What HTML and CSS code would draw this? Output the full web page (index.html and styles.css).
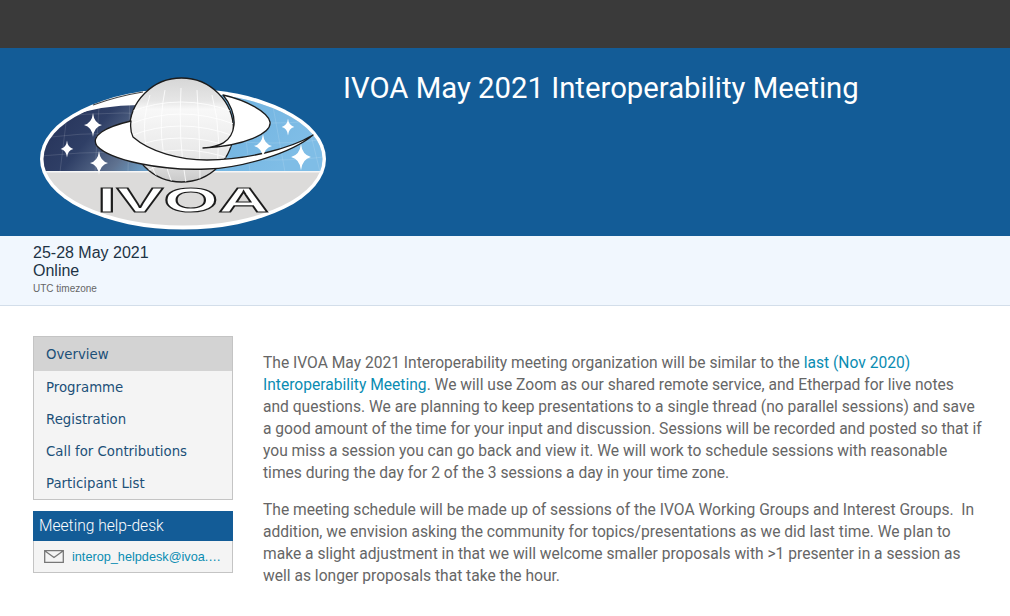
FILE: index.html
```html
<!DOCTYPE html>
<html>
<head>
<meta charset="UTF-8">
<title>IVOA May 2021 Interoperability Meeting</title>
<link rel="stylesheet" href="styles.css">
</head>
<body>
<div class="topbar"></div>
<div class="header">
	<svg class="logo" viewBox="33 66 300 170" width="300" height="170">
		<defs>
			<linearGradient id="night" x1="0" x2="1" y1="0" y2="0.25">
				<stop offset="0" stop-color="#212c52"/>
				<stop offset="0.3" stop-color="#2f3f66"/>
				<stop offset="0.46" stop-color="#5f7290"/>
				<stop offset="0.62" stop-color="#6fb2e0"/>
				<stop offset="1" stop-color="#7fbde6"/>
			</linearGradient>
			<linearGradient id="ball" x1="0" x2="0" y1="0" y2="1">
				<stop offset="0" stop-color="#d6d6d6"/>
				<stop offset="0.22" stop-color="#e6e6e6"/>
				<stop offset="0.3" stop-color="#f8f8f8"/>
				<stop offset="0.75" stop-color="#e8e8e8"/>
				<stop offset="1" stop-color="#c9c9c9"/>
			</linearGradient>
			<clipPath id="oval"><ellipse cx="183" cy="159" rx="139.500" ry="66.500"/></clipPath>
			<clipPath id="sphere"><circle cx="181.500" cy="130" r="52"/></clipPath>
			<path id="star" d="M0-12Q1 -2 9 0Q1 2 0 12Q-1 2-9 0Q-1-2 0-12Z" fill="#fff"/>
		</defs>
		<ellipse cx="183" cy="159" rx="143" ry="70.500" fill="#fff"/>
		<ellipse cx="183" cy="159" rx="139.500" ry="66.500" fill="#dcdbda"/>
		<g clip-path="url(#oval)">
			<rect x="40" y="85" width="290" height="87" fill="url(#night)"/>
			<path d="M50 118Q120 108 200 118T330 118M40 138Q120 128 200 138T330 138M40 156Q120 148 200 156T330 156M70 90L60 172M100 90L95 172M130 90L128 172M240 90L250 172M270 90L285 172M300 90L320 172" stroke="#fff" stroke-opacity=".13" fill="none"/>
			<rect x="40" y="171" width="290" height="1.500" fill="#f6f6f6"/>
		</g>
		<path d="M70 116Q108 97 145 91L145 105Q105 104 70 116Z" fill="#fff"/>
		<path d="M93 105Q118 96 143 92" stroke="#444" stroke-width="1.200" fill="none"/>
		<circle cx="181.500" cy="130" r="52" fill="url(#ball)" stroke="#1c1c1c" stroke-width="1.300"/>
		<g clip-path="url(#sphere)" stroke="#fff" stroke-opacity=".8" fill="none">
			<path d="M130 112Q180 92 234 112M130 124Q180 104 234 124M130 136Q180 116 234 136M130 148Q180 128 234 148M135 160Q180 140 234 160M145 172Q180 152 225 172"/>
			<path d="M150 95Q135 140 160 183M165 90Q155 140 172 183M181 88Q178 140 186 183M197 90Q200 140 200 183M212 95Q224 140 214 183"/>
		</g>
		<path d="M223 95C246 100 268 112 270 122C272 133 245 146 203 148C218 147 232 143 234 125C235 115 230 103 223 95Z" fill="#fff" stroke="#1c1c1c" stroke-width="1.300" stroke-linejoin="round"/>
		<path d="M313 135C292 153 242 168 207 169C160 171 110 160 97 146C90 136 105 127 131 121C130 128 131 133 133 137C150 152 180 160 207 160C245 160 290 149 313 135Z" fill="#fff" stroke="#1c1c1c" stroke-width="1.300" stroke-linejoin="round"/>
		<use href="#star" transform="translate(93 125)"/>
		<use href="#star" transform="translate(67 149) scale(.7)"/>
		<use href="#star" transform="translate(99 163)"/>
		<use href="#star" transform="translate(288 127) scale(.7)"/>
		<use href="#star" transform="translate(263 146)"/>
		<use href="#star" transform="translate(301 157) scale(1.100)"/>
		<text class="logotext" x="183" y="212" text-anchor="middle" textLength="172" lengthAdjust="spacingAndGlyphs">IVOA</text>
	</svg>
	<h1 class="title">IVOA May 2021 Interoperability Meeting</h1>
</div>
<div class="infobar">
	<div class="dates">25-28 May 2021</div>
	<div class="place">Online</div>
	<div class="zone">UTC timezone</div>
</div>
<div class="main">
	<div class="side">
		<ul class="menu">
			<li class="on"><a href="#">Overview</a></li>
			<li><a href="#">Programme</a></li>
			<li><a href="#">Registration</a></li>
			<li><a href="#">Call for Contributions</a></li>
			<li><a href="#">Participant List</a></li>
		</ul>
		<div class="helpdesk">
			<div class="helpdesk_title">Meeting help-desk</div>
			<div class="helpdesk_mail">
				<svg class="mailicon" viewBox="0 0 20 13" width="20" height="13"><path d="M.7.7H19.300V12.300H.7ZM.7.7L10 7.500L19.300.7" fill="none" stroke="#777" stroke-width="1.300"/></svg>
				<a href="#">interop_helpdesk@ivoa.…</a>
			</div>
		</div>
	</div>
	<div class="content">
		<p>The IVOA May 2021 Interoperability meeting organization will be similar to the <a href="#">last (Nov 2020)<br>Interoperability Meeting</a>. We will use Zoom as our shared remote service, and Etherpad for live notes<br>and questions. We are planning to keep presentations to a single thread (no parallel sessions) and save<br>a good amount of the time for your input and discussion. Sessions will be recorded and posted so that if<br>you miss a session you can go back and view it. We will work to schedule sessions with reasonable<br>times during the day for 2 of the 3 sessions a day in your time zone.</p>
		<p>The meeting schedule will be made up of sessions of the IVOA Working Groups and Interest Groups.&nbsp; In<br>addition, we envision asking the community for topics/presentations as we did last time. We plan to<br>make a slight adjustment in that we will welcome smaller proposals with &gt;1 presenter in a session as<br>well as longer proposals that take the hour.</p>
	</div>
</div>
</body>
</html>
```

FILE: styles.css
```css
*{margin:0;padding:0;box-sizing:border-box;}
html,body{height:616px;overflow:hidden;}
body{background:#fff;color:#666;font-family:"Liberation Sans",Arial,sans-serif;}
a{text-decoration:none;color:#0a8cb2;}
li{list-style-type:none;}

.topbar{height:48px;background:#3a3a3a;}
.header{height:188px;background:#135c97;display:flex;padding:18px 0 0 33px;}
.logo{display:block;flex:none;}
.logotext{font-family:"Liberation Sans",sans-serif;font-size:35px;font-weight:bold;fill:#fff;stroke:#1c1c1c;stroke-width:1.100;}
.title{font-family:Roboto,sans-serif;font-size:29.300px;font-weight:400;color:#fff;line-height:44px;margin:0 0 0 10px;height:44px;}

.infobar{height:70px;background:#f1f7fe;border-bottom:1px solid #d3deea;padding:8px 33px 0;color:#1d3345;}
.dates,.place{font-size:16px;line-height:18px;}
.zone{font-size:10px;line-height:17px;color:#666;}

.main{display:flex;padding:30px 0 0 33px;}
.side{width:200px;flex:none;}
.menu{background:#f4f4f4;border:1px solid #c4c4c4;font-family:"DejaVu Sans",sans-serif;font-size:13.300px;}
.menu li{height:32px;line-height:32px;padding:1px 0 0 12px;}
.menu li.on{height:34px;line-height:34px;background:#d3d3d3;}
.menu a{color:#1c5078;}
.helpdesk{margin-top:11px;border:1px solid #c4c4c4;background:#f4f4f4;}
.helpdesk_title{height:30px;line-height:30px;margin:-1px -1px 0;padding-left:6px;background:#135c97;color:#fff;font-family:Roboto,sans-serif;font-size:15.600px;font-weight:300;}
.helpdesk_mail{height:31px;display:flex;align-items:center;padding-left:10px;font-size:12.700px;}
.helpdesk_mail a{margin-left:8px;white-space:nowrap;}
.mailicon{flex:none;}

.content{margin-left:30px;padding-top:16px;font-family:Roboto,sans-serif;font-size:15.600px;line-height:22px;white-space:nowrap;}
.content p{margin-bottom:15px;}
```
